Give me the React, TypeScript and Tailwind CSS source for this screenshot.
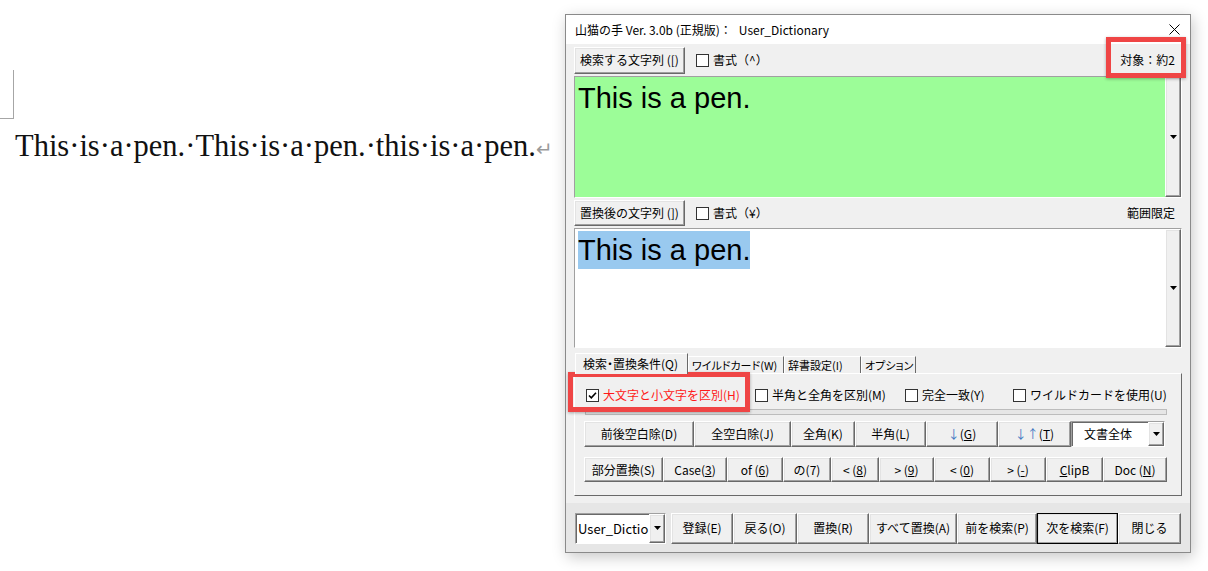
import React from "react";

const ui = "font-['Noto_Sans_CJK_JP','Noto_Sans',sans-serif] text-[12px] leading-none text-black";
const raised =
  "bg-[#f0f0f0] border border-t-white border-l-white border-r-[#696969] border-b-[#696969] shadow-[inset_-1px_-1px_0_#a0a0a0,inset_1px_1px_0_#e3e3e3]";
const sunken =
  "border border-t-[#a0a0a0] border-l-[#a0a0a0] border-r-white border-b-white shadow-[inset_1px_1px_0_#696969]";

const Arrow = () => (
  <svg width="7" height="4" viewBox="0 0 7 4">
    <path d="M0 0h7L3.5 4z" fill="#000" />
  </svg>
);

const Btn = ({ children, className = "" }: { children: React.ReactNode; className?: string }) => (
  <div className={`${raised} flex items-center justify-center shrink-0 whitespace-nowrap ${className}`}>{children}</div>
);

const Check = ({ checked = false }: { checked?: boolean }) => (
  <div className="w-[13px] h-[13px] shrink-0 bg-white border border-[#333] flex items-center justify-center">
    {checked && (
      <svg width="9" height="9" viewBox="0 0 9 9">
        <path d="M1 4.5l2.3 2.3L8 1.8" stroke="#000" strokeWidth="1.6" fill="none" />
      </svg>
    )}
  </div>
);

const Dn = () => <span className="text-[#3f78c2]">↓</span>;
const Up = () => <span className="text-[#3f78c2]">↑</span>;

const Tab = ({ label, w, active = false }: { label: string; w: string; active?: boolean }) => (
  <div
    className={`${w} flex items-center shrink-0 whitespace-nowrap border-t border-l border-r border-t-white border-l-white border-r-[#696969] [font-feature-settings:'palt'] ${
      active ? "h-[21px] pl-[7px] bg-[#f0f0f0] -mb-px relative z-10" : "h-[17px] pl-[3px] text-[11px]"
    }`}
  >
    {label}
  </div>
);

const ScrollBox = ({ bg, children }: { bg: string; children: React.ReactNode }) => (
  <div className={`${sunken} flex h-full`}>
    <div className={`flex-1 ${bg} pl-[3px] pt-[2px] overflow-hidden`}>{children}</div>
    <div className={`${raised} w-[16px] flex items-center justify-center`}>
      <Arrow />
    </div>
  </div>
);

export default function App() {
  return (
    <div className="relative w-[1208px] h-[571px] bg-white overflow-hidden">
      {/* document */}
      <div className="pt-[70px]">
        <div className="w-[14px] h-[49px] border-r border-b border-[#a6a6a6]" />
        <div className="pl-[15px] mt-[7px] font-['Liberation_Serif',serif] text-[30.5px] leading-[40px] text-[#111] whitespace-nowrap">
          This·is·a·pen.·This·is·a·pen.·this·is·a·pen.
          <span className="text-[#9a9a9a] text-[20px] font-['DejaVu_Sans',sans-serif]">↵</span>
        </div>
      </div>

      {/* dialog window */}
      <div
        className={`${ui} absolute left-[565px] top-[14px] w-[626px] h-[539px] bg-[#f0f0f0] border border-[#8a8a8a] shadow-[2px_4px_14px_rgba(0,0,0,0.22)] flex flex-col`}
      >
        <div className="h-[29px] bg-white flex items-center justify-between pl-[9px] pr-[10px]">
          <div className="flex items-center">
            <span>山猫の手 Ver. 3.0b (正規版)：</span>
            <span className="ml-[7px]">User_Dictionary</span>
          </div>
          <svg width="11" height="11" viewBox="0 0 11 11">
            <path d="M0.5 0.5l10 10M10.5 0.5l-10 10" stroke="#000" strokeWidth="1" />
          </svg>
        </div>

        <div className="flex flex-col px-[8px]">
          <div className="h-[32px] flex items-center">
            <Btn className="w-[111px] h-[27px]">検索する文字列 ([)</Btn>
            <div className="ml-[11px] flex items-center gap-[4px]">
              <Check />
              <span>書式（^）</span>
            </div>
            <span className="ml-auto pr-[7px]">対象：約2</span>
          </div>

          <div className="h-[122px]">
            <ScrollBox bg="bg-[#9cfd98]">
              <div className="font-['Liberation_Sans',sans-serif] text-[29px] leading-[38px] whitespace-nowrap">This is a pen.</div>
            </ScrollBox>
          </div>

          <div className="h-[30px] flex items-center">
            <Btn className="w-[111px] h-[26px]">置換後の文字列 (])</Btn>
            <div className="ml-[11px] flex items-center gap-[4px]">
              <Check />
              <span>書式（¥）</span>
            </div>
            <span className="ml-auto pr-[7px]">範囲限定</span>
          </div>

          <div className="h-[120px]">
            <ScrollBox bg="bg-white">
              <span className="inline-block bg-[#99c9ef] font-['Liberation_Sans',sans-serif] text-[29px] h-[38px] leading-[38px] whitespace-nowrap">
                This is a pen.
              </span>
            </ScrollBox>
          </div>

          <div className="h-[6px]" />

          {/* tabs */}
          <div className="h-[19px] flex items-end pl-px">
            <Tab label="検索・置換条件(Q)" w="w-[113px]" active />
            <Tab label="ワイルドカード(W)" w="w-[96px]" />
            <Tab label="辞書設定(I)" w="w-[77px]" />
            <Tab label="オプション" w="w-[55px]" />
          </div>

          <div className="h-[123px] w-[608px] border border-t-white border-l-white border-r-[#696969] border-b-[#696969] flex flex-col pl-[9px]">
            <div className="h-[16px] mt-[13px] flex items-center">
              <div className="w-[171px] flex items-center gap-[4px] pl-[2px]">
                <Check checked />
                <span className="text-[#ff1a1a]">大文字と小文字を区別(H)</span>
              </div>
              <div className="w-[150px] flex items-center gap-[4px]">
                <Check />
                <span>半角と全角を区別(M)</span>
              </div>
              <div className="w-[108px] flex items-center gap-[4px]">
                <Check />
                <span>完全一致(Y)</span>
              </div>
              <div className="flex items-center gap-[4px]">
                <Check />
                <span>ワイルドカードを使用(U)</span>
              </div>
            </div>

            <div className="mt-[6px] ml-px w-[582px] h-[6px] border border-[#bcbcbc] bg-[#e6e6e6]" />

            <div className="mt-[6px] flex h-[26px]">
              <Btn className="w-[110px]">前後空白除(D)</Btn>
              <Btn className="w-[97px]">全空白除(J)</Btn>
              <Btn className="w-[64px]">全角(K)</Btn>
              <Btn className="w-[71px]">半角(L)</Btn>
              <Btn className="w-[72px]">
                <Dn />(<u>G</u>)
              </Btn>
              <Btn className="w-[73px]">
                <Dn />
                <Up />(<u>T</u>)
              </Btn>
              <div className={`${sunken} w-[94px] bg-white flex`}>
                <span className="flex-1 pl-[12px] pt-[6px]">文書全体</span>
                <div className={`${raised} w-[16px] flex items-center justify-center`}>
                  <Arrow />
                </div>
              </div>
            </div>

            <div className="mt-[10px] flex h-[25px]">
              <Btn className="w-[79px]">部分置換(S)</Btn>
              <Btn className="w-[64px]">
                Case(<u>3</u>)
              </Btn>
              <Btn className="w-[56px]">
                of (<u>6</u>)
              </Btn>
              <Btn className="w-[48px]">の(7)</Btn>
              <Btn className="w-[48px]">
                &lt; (<u>8</u>)
              </Btn>
              <Btn className="w-[55px]">
                &gt; (<u>9</u>)
              </Btn>
              <Btn className="w-[56px]">
                &lt; (<u>0</u>)
              </Btn>
              <Btn className="w-[56px]">
                &gt; (<u>-</u>)
              </Btn>
              <Btn className="w-[57px]">
                <u>C</u>lipB
              </Btn>
              <Btn className="w-[64px]">
                Doc (<u>N</u>)
              </Btn>
            </div>
          </div>
        </div>

        <div className="h-[7px]" />

        {/* bottom band */}
        <div className="flex-1 bg-[#e6e6e6] flex items-center pl-[9px] pt-[1px]">
          <div className={`${sunken} w-[91px] h-[31px] bg-white flex`}>
            <span className="flex-1 pl-[2px] pt-[8px] overflow-hidden whitespace-nowrap text-[13px]">User_Dictio</span>
            <div className={`${raised} w-[16px] flex items-center justify-center`}>
              <Arrow />
            </div>
          </div>
          <div className="ml-[5px] flex h-[31px]">
            <Btn className="w-[62px]">登録(E)</Btn>
            <Btn className="w-[64px]">戻る(O)</Btn>
            <Btn className="w-[72px]">置換(R)</Btn>
            <Btn className="w-[88px]">すべて置換(A)</Btn>
            <Btn className="w-[80px]">前を検索(P)</Btn>
            <Btn className="w-[81px] outline outline-1 outline-black -outline-offset-1">次を検索(F)</Btn>
            <Btn className="w-[63px]">閉じる</Btn>
          </div>
        </div>
      </div>

      {/* red highlight marks */}
      <div className="absolute left-[1106px] top-[37px] w-[80px] h-[41px] border-[5px] border-[#ef4545] shadow-[0_1px_3px_rgba(0,0,0,0.3)]" />
      <div className="absolute left-[568px] top-[372px] w-[182px] h-[40px] border-[5px] border-[#ef4545] shadow-[0_1px_3px_rgba(0,0,0,0.3)]" />
    </div>
  );
}
